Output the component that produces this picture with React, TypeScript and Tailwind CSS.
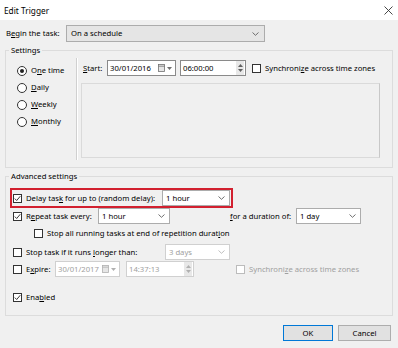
import React from "react";

const font = { fontFamily: '"Noto Sans", "Liberation Sans", sans-serif' };

function Chevron({ color = "#606060" }: { color?: string }) {
  return (
    <svg width="7" height="4" viewBox="0 0 7 4" className="shrink-0">
      <path d="M0.5 0.5 L3.5 3.3 L6.5 0.5" fill="none" stroke={color} strokeWidth="0.9" />
    </svg>
  );
}

function Check({ checked = false, disabled = false }: { checked?: boolean; disabled?: boolean }) {
  return (
    <span
      className={`inline-flex w-[9px] h-[9px] shrink-0 items-center justify-center border bg-white ${
        disabled ? "border-[#bcbcbc]" : "border-[#333333]"
      }`}
    >
      {checked && (
        <svg width="7" height="7" viewBox="0 0 7 7">
          <path d="M0.8 3.6 L2.7 5.5 L6.3 1.2" fill="none" stroke="#222" strokeWidth="0.9" />
        </svg>
      )}
    </span>
  );
}

function Radio({ checked = false }: { checked?: boolean }) {
  return (
    <span className="inline-flex w-[10px] h-[10px] shrink-0 items-center justify-center rounded-full border border-[#333333] bg-white">
      {checked && <span className="w-[4px] h-[4px] rounded-full bg-[#222]" />}
    </span>
  );
}

function Select({
  w,
  text,
  disabled = false,
  h = "h-[16px]",
}: {
  w: string;
  text: string;
  disabled?: boolean;
  h?: string;
}) {
  return (
    <div
      className={`${w} ${h} shrink-0 flex items-center justify-between pl-[3px] pr-[4px] border bg-white ${
        disabled ? "border-[#d0d0d0] text-[#a0a0a0]" : "border-[#acacac] text-black"
      }`}
    >
      <span>{text}</span>
      <Chevron color={disabled ? "#b8b8b8" : "#606060"} />
    </div>
  );
}

function DateBox({ w, text, disabled = false }: { w: string; text: string; disabled?: boolean }) {
  const c = disabled ? "#b0b0b0" : "#707070";
  return (
    <div
      className={`${w} h-[16px] shrink-0 flex items-center justify-between pl-[2px] pr-[3px] border bg-white ${
        disabled ? "border-[#d0d0d0] text-[#a0a0a0]" : "border-[#8a8a8a] text-black"
      }`}
    >
      <span>{text}</span>
      <span className="flex items-center gap-[2px]">
        <svg width="7" height="8" viewBox="0 0 7 8">
          <rect x="0.5" y="0.5" width="6" height="7" fill="#e6e6e6" stroke={c} strokeWidth="0.8" />
          <line x1="0.5" y1="2.2" x2="6.5" y2="2.2" stroke={c} strokeWidth="0.8" />
        </svg>
        <svg width="5" height="3" viewBox="0 0 5 3">
          <path d="M0 0 L5 0 L2.5 3 Z" fill={c} />
        </svg>
      </span>
    </div>
  );
}

function TimeBox({ w, text, disabled = false }: { w: string; text: string; disabled?: boolean }) {
  const c = disabled ? "#b0b0b0" : "#606060";
  return (
    <div
      className={`${w} h-[16px] shrink-0 flex items-center justify-between pl-[2px] border bg-white ${
        disabled ? "border-[#d0d0d0] text-[#a0a0a0]" : "border-[#8a8a8a] text-black"
      }`}
    >
      <span>{text}</span>
      <span className="w-[8px] h-[14px] mr-[1px] flex flex-col items-center justify-center gap-[2px] bg-[#e8e8e8]">
        <svg width="5" height="3" viewBox="0 0 5 3">
          <path d="M0 3 L5 3 L2.5 0 Z" fill={c} />
        </svg>
        <svg width="5" height="3" viewBox="0 0 5 3">
          <path d="M0 0 L5 0 L2.5 3 Z" fill={c} />
        </svg>
      </span>
    </div>
  );
}

function U({ children }: { children: React.ReactNode }) {
  return <span className="underline underline-offset-[1px] decoration-[0.5px]">{children}</span>;
}

export default function App() {
  return (
    <div className="w-[398px] h-[348px] bg-[#f0f0f0] text-[7.7px] leading-[11px] text-black overflow-hidden" style={font}>
      {/* Title bar */}
      <div className="h-[20px] bg-white flex items-center justify-between pl-[4px] pr-[5px]">
        <span className="text-[8.3px]">Edit Trigger</span>
        <svg width="9" height="9" viewBox="0 0 9 9">
          <path d="M0.5 0.5 L8.5 8.5 M8.5 0.5 L0.5 8.5" stroke="#333" strokeWidth="0.9" />
        </svg>
      </div>

      {/* Begin the task */}
      <div className="mt-[5px] h-[17px] flex items-center pl-[6px]">
        <span className="w-[60px]">
          B<U>e</U>gin the task:
        </span>
        <div className="w-[199px] h-[17px] flex items-center justify-between pl-[4px] pr-[5px] border border-[#acacac] bg-[#e5e5e5]">
          <span>On a schedule</span>
          <Chevron />
        </div>
      </div>

      {/* Settings */}
      <fieldset className="mt-[2px] mx-[5px] border border-[#dcdcdc] pb-[7px]">
        <legend className="ml-[3px] px-[2px] leading-[12px]">Settings</legend>
        <div className="flex">
          <div className="w-[70px] pl-[11px] pt-[6px] flex flex-col">
            {[
              { l: <>O<U>n</U>e time</>, c: true },
              { l: <><U>D</U>aily</> },
              { l: <><U>W</U>eekly</> },
              { l: <><U>M</U>onthly</> },
            ].map((r, i) => (
              <div key={i} className="h-[17px] flex items-center gap-[4px]">
                <Radio checked={r.c} />
                <span>{r.l}</span>
              </div>
            ))}
          </div>
          <div className="mt-[2px] h-[102px] w-[2px] border-l border-[#d0d0d0] border-r border-r-white" />
          <div className="pl-[3px] flex flex-col">
            <div className="mt-[4px] h-[16px] flex items-center">
              <span className="w-[26px] pl-[2px]">
                <U>S</U>tart:
              </span>
              <DateBox w="w-[69px]" text="30/01/2016" />
              <div className="w-[4px]" />
              <TimeBox w="w-[66px]" text="06:00:00" />
              <div className="w-[6px]" />
              <Check />
              <span className="ml-[4px]">
                Synchroni<U>z</U>e across time zones
              </span>
            </div>
            <div className="mt-[7px] w-[299px] h-[75px] border border-[#dadada] border-r-[#c8c8c8]" />
          </div>
        </div>
      </fieldset>

      {/* Advanced settings */}
      <fieldset className="mt-[2px] mx-[5px] h-[146px] border border-[#dcdcdc]">
        <legend className="ml-[3px] px-[2px] leading-[12px]">Advanced settings</legend>
        <div className="flex flex-col pl-[4px]">
          <div className="mt-[6px] w-[223px] h-[20px] border-2 border-[#d2202f] flex items-center pl-[1px]">
            <Check checked />
            <span className="ml-[4px] w-[136px]">
              Delay tas<U>k</U> for up to (random delay):
            </span>
            <Select w="w-[68px]" text="1 hour" />
          </div>
          <div className="h-[16px] flex items-center pl-[3px]">
            <Check checked />
            <span className="ml-[4px] w-[72px]">
              R<U>e</U>peat task every:
            </span>
            <Select w="w-[72px]" text="1 hour" />
            <span className="ml-[60px] w-[66px]">
              <U>f</U>or a duration of:
            </span>
            <Select w="w-[65px]" text="1 day" />
          </div>
          <div className="mt-[1px] h-[16px] flex items-center pl-[24px]">
            <Check />
            <span className="ml-[4px]">
              Stop all running tasks at end of repetition durat<U>i</U>on
            </span>
          </div>
          <div className="mt-[3px] h-[16px] flex items-center pl-[3px]">
            <Check />
            <span className="ml-[4px] w-[139px]">
              Stop task if it runs <U>l</U>onger than:
            </span>
            <Select w="w-[65px]" text="3 days" disabled />
          </div>
          <div className="mt-[1px] h-[16px] flex items-center pl-[3px]">
            <Check />
            <span className="ml-[4px] w-[29px]">
              E<U>x</U>pire:
            </span>
            <DateBox w="w-[65px]" text="30/01/2017" disabled />
            <div className="w-[6px]" />
            <TimeBox w="w-[68px]" text="14:37:13" disabled />
            <div className="w-[42px]" />
            <Check disabled />
            <span className="ml-[4px] text-[#a0a0a0]">
              Synchroni<U>z</U>e across time zones
            </span>
          </div>
          <div className="mt-[12px] h-[16px] flex items-center pl-[3px]">
            <Check checked />
            <span className="ml-[4px]">
              Ena<U>b</U>led
            </span>
          </div>
        </div>
      </fieldset>

      {/* Buttons */}
      <div className="mt-[9px] flex justify-end gap-[5px] pr-[7px]">
        <button className="w-[50px] h-[16px] border border-[#0078d7] bg-[#e1e1e1] text-[7.7px] leading-[11px]" style={font}>
          OK
        </button>
        <button className="w-[53px] h-[16px] border border-[#adadad] bg-[#e1e1e1] text-[7.7px] leading-[11px]" style={font}>
          Cancel
        </button>
      </div>
    </div>
  );
}
